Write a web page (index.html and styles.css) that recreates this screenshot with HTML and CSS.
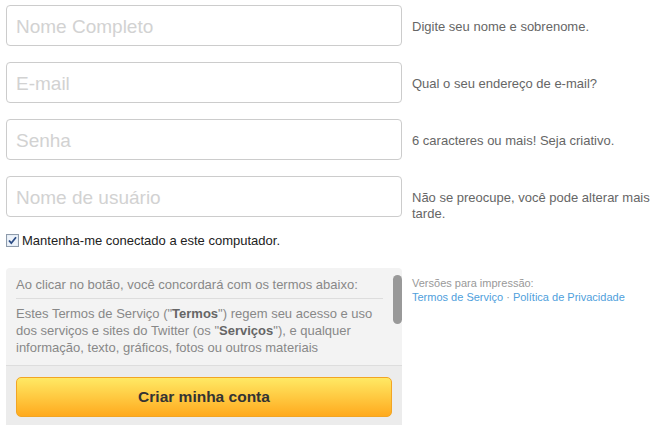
FILE: index.html
```html
<!DOCTYPE html>
<html lang="pt-BR">
<head>
    <meta charset="UTF-8">
    <title>Criar conta</title>
    <link rel="stylesheet" href="styles.css">
</head>
<body>
    <form class="signup">
        <div class="row">
            <input class="field" type="text" placeholder="Nome Completo">
            <p class="hint">Digite seu nome e sobrenome.</p>
        </div>
        <div class="row">
            <input class="field" type="text" placeholder="E-mail">
            <p class="hint">Qual o seu endereço de e-mail?</p>
        </div>
        <div class="row">
            <input class="field" type="password" placeholder="Senha">
            <p class="hint">6 caracteres ou mais! Seja criativo.</p>
        </div>
        <div class="row">
            <input class="field" type="text" placeholder="Nome de usuário">
            <p class="hint">Não se preocupe, você pode alterar mais tarde.</p>
        </div>

        <label class="remember">
            <svg class="check" width="13" height="13" viewBox="0 0 13 13">
                <rect x="0.5" y="0.5" width="12" height="12" fill="#dfe8f3" stroke="#8e9bab"/>
                <rect x="1.5" y="1.5" width="10" height="10" fill="#eef3fa"/>
                <path d="M3 6.5 L5.3 9.2 L10 3.3" fill="none" stroke="#2b4c85" stroke-width="1.8"/>
            </svg>
            Mantenha-me conectado a este computador.
        </label>

        <div class="bottom">
            <div class="terms">
                <div class="terms-scroll">
                    <p class="terms-head">Ao clicar no botão, você concordará com os termos abaixo:</p>
                    <p class="terms-text">Estes Termos de Serviço ("<b>Termos</b>") regem seu acesso e uso dos serviços e sites do Twitter (os "<b>Serviços</b>"), e qualquer informação, texto, gráficos, fotos ou outros materiais</p>
                </div>
                <span class="thumb"></span>
                <div class="submit">
                    <button class="btn" type="button">Criar minha conta</button>
                </div>
            </div>
            <div class="print">
                <p class="print-label">Versões para impressão:</p>
                <p class="print-links"><a href="#">Termos de Serviço</a> <span class="dot">·</span> <a href="#">Política de Privacidade</a></p>
            </div>
        </div>
    </form>
</body>
</html>
```

FILE: styles.css
```css
body {
    margin: 0;
    font-family: "Liberation Sans", Arial, sans-serif;
    font-size: 13px;
    color: #333;
    background-color: #fff;
}
p {
    margin: 0;
}
.signup {
    padding: 5px 0 0 6px;
}
.row {
    display: flex;
    gap: 10px;
    height: 41px;
    margin-bottom: 16px;
}
.field {
    box-sizing: border-box;
    width: 396px;
    height: 41px;
    flex: none;
    margin: 0;
    padding: 2px 9px 0;
    border: 1px solid #ccc;
    border-radius: 4px;
    font-family: "Liberation Sans", Arial, sans-serif;
    font-size: 19px;
    color: #333;
    background-color: #fff;
}
.field::placeholder {
    color: #d2d2d2;
}
.hint {
    flex: 1;
    padding-top: 14px;
    line-height: 16px;
    color: #666;
}
.remember {
    display: flex;
    align-items: center;
    gap: 3px;
    margin-top: -1px;
    height: 16px;
    color: #222;
}
.check {
    flex: none;
}
.bottom {
    display: flex;
    gap: 10px;
    margin-top: 20px;
}
.terms {
    position: relative;
    width: 396px;
    flex: none;
    background-color: #f3f3f3;
    border-radius: 4px 4px 0 0;
    overflow: hidden;
}
.terms-scroll {
    height: 89px;
    overflow: hidden;
    padding: 8px 19px 0 10px;
    line-height: 17px;
    color: #888;
}
.terms-head {
    padding-bottom: 5px;
    border-bottom: 1px solid #ddd;
}
.terms-text {
    margin-top: 6px;
}
.terms-text b {
    color: #666;
}
.thumb {
    position: absolute;
    top: 7px;
    right: 0;
    width: 9px;
    height: 49px;
    border-radius: 5px;
    background-color: #999;
}
.submit {
    border-top: 1px solid #ddd;
    background-color: #ececec;
    padding: 11px 10px 10px;
}
.btn {
    display: block;
    width: 100%;
    height: 40px;
    border: 1px solid #f2a524;
    border-radius: 5px;
    background: linear-gradient(#ffe964, #ffaa1e);
    font-family: "Liberation Sans", Arial, sans-serif;
    font-size: 15.5px;
    font-weight: bold;
    color: #333;
}
.print {
    padding-top: 8px;
    font-size: 11px;
    line-height: 14px;
}
.print-label {
    color: #999;
}
.print-links a {
    color: #4fa0dc;
    text-decoration: none;
}
.dot {
    color: #999;
}
```
